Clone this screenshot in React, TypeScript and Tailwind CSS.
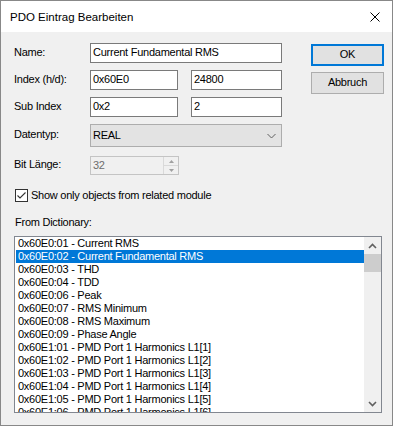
import React from "react";

const items = [
  "0x60E0:01 - Current RMS",
  "0x60E0:02 - Current Fundamental RMS",
  "0x60E0:03 - THD",
  "0x60E0:04 - TDD",
  "0x60E0:06 - Peak",
  "0x60E0:07 - RMS Minimum",
  "0x60E0:08 - RMS Maximum",
  "0x60E0:09 - Phase Angle",
  "0x60E1:01 - PMD Port 1 Harmonics L1[1]",
  "0x60E1:02 - PMD Port 1 Harmonics L1[2]",
  "0x60E1:03 - PMD Port 1 Harmonics L1[3]",
  "0x60E1:04 - PMD Port 1 Harmonics L1[4]",
  "0x60E1:05 - PMD Port 1 Harmonics L1[5]",
  "0x60E1:06 - PMD Port 1 Harmonics L1[6]",
];

function Label({ children }: { children: React.ReactNode }) {
  return <div className="w-[76px] shrink-0 leading-[13px] mb-[2px]">{children}</div>;
}

function TextBox({ value, w }: { value: string; w: string }) {
  return (
    <div className={`${w} h-[20px] bg-white border border-[#7a7a7a] flex items-center pl-[2px]`}>
      <span className="leading-[13px] mb-[2px]">{value}</span>
    </div>
  );
}

export default function App() {
  return (
    <div className="w-[393px] h-[427px] bg-white [font-family:'Liberation_Sans',Arial,sans-serif] text-[11px] text-black">
      <div className="w-[393px] h-[426px] border border-[#888888] flex flex-col">
        {/* title bar */}
        <div className="h-[31px] bg-white flex items-center pl-[9px] shrink-0">
          <span className="text-[11.5px] leading-[14px]">PDO Eintrag Bearbeiten</span>
          <svg className="ml-auto mr-[12px]" width="10" height="10" viewBox="0 0 10 10">
            <path d="M0.5 0.5L9.5 9.5M9.5 0.5L0.5 9.5" stroke="#000" strokeWidth="1" />
          </svg>
        </div>

        {/* body */}
        <div className="flex-1 bg-[#f0f0f0] pl-[13px] tracking-[-0.25px]">
          <div className="flex">
            <div className="pt-[11px] w-[268px] flex flex-col">
              <div className="flex items-center h-[20px]">
                <Label>Name:</Label>
                <TextBox value="Current Fundamental RMS" w="w-[192px]" />
              </div>
              <div className="flex items-center h-[20px] mt-[7px]">
                <Label>Index (h/d):</Label>
                <TextBox value="0x60E0" w="w-[88px]" />
                <div className="w-[13px]" />
                <TextBox value="24800" w="w-[91px]" />
              </div>
              <div className="flex items-center h-[20px] mt-[7px]">
                <Label>Sub Index</Label>
                <TextBox value="0x2" w="w-[88px]" />
                <div className="w-[13px]" />
                <TextBox value="2" w="w-[91px]" />
              </div>
              <div className="flex items-center h-[23px] mt-[7px]">
                <Label>Datentyp:</Label>
                <div className="w-[192px] h-[23px] bg-[#e3e3e3] border border-[#adadad] flex items-center pl-[2px]">
                  <span className="leading-[13px] mb-[1px]">REAL</span>
                  <svg className="ml-auto mr-[5px]" width="9" height="6" viewBox="0 0 9 6">
                    <path d="M0.5 1L4.5 5L8.5 1" stroke="#606060" strokeWidth="1" fill="none" />
                  </svg>
                </div>
              </div>
              <div className="flex items-center h-[19px] mt-[9px]">
                <Label>Bit Länge:</Label>
                <div className="w-[89px] h-[19px] bg-[#f0f0f0] border border-[#c4c4c4] flex">
                  <div className="flex-1 flex items-center pl-[2px] text-[#6d6d6d]">
                    <span className="leading-[13px] mb-[1px]">32</span>
                  </div>
                  <div className="w-[15px] border-l border-[#d9d9d9] flex flex-col">
                    <div className="flex-1 flex items-center justify-center border-b border-[#d9d9d9]">
                      <svg width="5" height="3" viewBox="0 0 5 3">
                        <path d="M0 3L2.5 0L5 3Z" fill="#a0a0a0" />
                      </svg>
                    </div>
                    <div className="flex-1 flex items-center justify-center">
                      <svg width="5" height="3" viewBox="0 0 5 3">
                        <path d="M0 0L2.5 3L5 0Z" fill="#a0a0a0" />
                      </svg>
                    </div>
                  </div>
                </div>
              </div>
            </div>
            <div className="ml-[29px] pt-[12px] flex flex-col gap-[6px]">
              <div className="w-[73px] h-[22px] bg-[#e1e1e1] border-2 border-[#0078d7] flex items-center justify-center">
                <span className="leading-[13px] mb-[1px]">OK</span>
              </div>
              <div className="w-[73px] h-[22px] bg-[#e1e1e1] border border-[#adadad] flex items-center justify-center">
                <span className="leading-[13px] mb-[1px]">Abbruch</span>
              </div>
            </div>
          </div>

          {/* checkbox */}
          <div className="flex items-center mt-[14px] h-[13px] pl-[1px]">
            <div className="w-[13px] h-[13px] bg-white border border-[#333333] flex items-center justify-center">
              <svg width="11" height="11" viewBox="0 0 11 11">
                <path d="M1.5 5.5L4 8L9.5 2.5" stroke="#333" strokeWidth="1.1" fill="none" />
              </svg>
            </div>
            <span className="ml-[3px] leading-[13px]">Show only objects from related module</span>
          </div>

          <div className="mt-[14px] leading-[13px] pl-[1px]">From Dictionary:</div>

          {/* list */}
          <div className="mt-[7px] w-[368px] h-[177px] bg-white border border-[#828790] flex overflow-hidden">
            <div className="flex-1 pl-[1px] overflow-hidden">
              {items.map((it, i) => (
                <div
                  key={i}
                  className={`h-[13px] leading-[13px] pl-[2px] whitespace-nowrap ${
                    i === 1 ? "bg-[#0078d7] text-white" : ""
                  }`}
                >
                  {it}
                </div>
              ))}
            </div>
            <div className="w-[17px] bg-[#f0f0f0] flex flex-col shrink-0">
              <div className="h-[17px] flex items-center justify-center">
                <svg width="9" height="6" viewBox="0 0 9 6">
                  <path d="M1 5L4.5 1.5L8 5" stroke="#606060" strokeWidth="1.6" fill="none" />
                </svg>
              </div>
              <div className="h-[18px] bg-[#cdcdcd]" />
              <div className="flex-1" />
              <div className="h-[17px] flex items-center justify-center">
                <svg width="9" height="6" viewBox="0 0 9 6">
                  <path d="M1 1L4.5 4.5L8 1" stroke="#606060" strokeWidth="1.6" fill="none" />
                </svg>
              </div>
            </div>
          </div>
        </div>
      </div>
    </div>
  );
}
